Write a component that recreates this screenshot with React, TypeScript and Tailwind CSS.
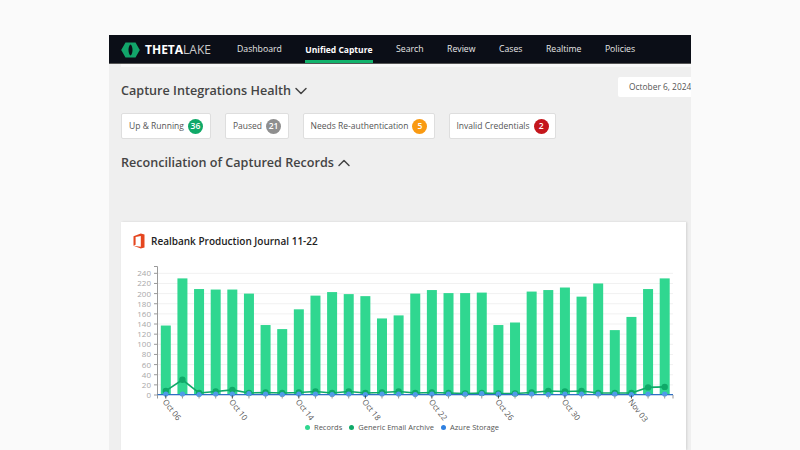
import { ChevronDown, ChevronUp } from "lucide-react";

const navItems = ["Dashboard", "Unified Capture", "Search", "Review", "Cases", "Realtime", "Policies"];

const pills = [
  { label: "Up & Running", count: "36", color: "bg-[#0fa968]", width: "w-[90px]" },
  { label: "Paused", count: "21", color: "bg-[#8f8f8f]", width: "w-[64px]" },
  { label: "Needs Re-authentication", count: "5", color: "bg-[#f99a12]", width: "w-[132px]" },
  { label: "Invalid Credentials", count: "2", color: "bg-[#c4161c]", width: "w-[107px]" },
];

const records = [
  137, 230, 209, 208, 208, 200, 138, 130, 169, 196, 203, 199, 195, 151, 157, 200, 207, 201, 201,
  202, 138, 143, 204, 207, 212, 194, 220, 128, 154, 209, 230,
];
const email = [
  8, 30, 4, 7, 10, 4, 5, 4, 5, 7, 4, 7, 4, 5, 7, 4, 5, 4, 3, 4, 3, 3, 5, 8, 7, 8, 4, 4, 4, 15, 16,
];
const azure = [
  2, 2, 1, 2, 2, 3, 2, 1, 2, 2, 1, 2, 1, 2, 2, 1, 2, 2, 2, 3, 2, 2, 2, 1, 2, 2, 2, 2, 1, 2, 2,
];
const yTicks = [0, 20, 40, 60, 80, 100, 120, 140, 160, 180, 200, 220, 240];
const xLabels = ["Oct 06", "Oct 10", "Oct 14", "Oct 18", "Oct 22", "Oct 26", "Oct 30", "Nov 03"];

const barX = (i: number) => 165.8 + i * 16.63;
const valY = (v: number) => 395 - v * 0.507;

function Logo() {
  return (
    <svg width="19" height="16" viewBox="0 0 19 16">
      <path d="M4.5 0.5H14.5L18.8 8L14.5 15.5H4.5L0.2 8Z" fill="#12a46a" />
      <path d="M9.5 2.5C6.8 4 6.8 12 9.5 13.5C12.2 12 12.2 4 9.5 2.5Z" fill="#0b0e17" />
    </svg>
  );
}

function OfficeIcon() {
  return (
    <svg width="12" height="16" viewBox="0 0 12 16">
      <path d="M0.5 3.2L7.8 0.4L11.5 1.5V14.4L7.8 15.6L0.5 12.8L7.8 13.8V2.9L2.6 4V11.7L0.5 12.8Z" fill="#e5461f" />
    </svg>
  );
}

function Chart() {
  return (
    <svg width="565" height="161" viewBox="121 262 565 161" className="block">
      {yTicks.map((t) => (
        <g key={t}>
          <line x1="157" x2="673" y1={valY(t)} y2={valY(t)} stroke="#f1f1f1" />
          <line x1="154" x2="157.5" y1={valY(t)} y2={valY(t)} stroke="#9a9a9a" />
          <text x="151" y={valY(t) + 3} textAnchor="end" fontSize="8" fill="#a8a8a8">
            {t}
          </text>
        </g>
      ))}
      <line x1="154" x2="157.5" y1="266.5" y2="266.5" stroke="#9a9a9a" />
      <line x1="157.5" x2="157.5" y1="266.5" y2="395" stroke="#9a9a9a" />
      {records.map((v, i) => (
        <rect key={i} x={barX(i) - 5} y={valY(v)} width="10" height={v * 0.507} fill="#30d790" />
      ))}
      <polyline
        points={email.map((v, i) => `${barX(i)},${valY(v)}`).join(" ")}
        fill="none"
        stroke="#0fa968"
        strokeWidth="1.6"
      />
      {email.map((v, i) => (
        <circle key={i} cx={barX(i)} cy={valY(v)} r="3.2" fill="#0fa968" />
      ))}
      <line x1="157.5" x2="673" y1="394.7" y2="394.7" stroke="#2f6fc4" strokeWidth="1.2" />
      {azure.map((v, i) => (
        <circle key={i} cx={barX(i)} cy={valY(v)} r="2.6" fill="#4f9be8" />
      ))}
      {records.map((_, i) => (
        <line key={i} x1={barX(i)} x2={barX(i)} y1="395.5" y2="398.5" stroke={i % 4 === 0 ? "#444" : "#999"} />
      ))}
      <line x1="157.5" x2="157.5" y1="395" y2="398.5" stroke="#999" />
      <line x1="673" x2="673" y1="395" y2="398.5" stroke="#999" />
      {xLabels.map((label, i) => (
        <text
          key={label}
          x={barX(i * 4) - 3.5}
          y="402"
          fontSize="8"
          fill="#555"
          transform={`rotate(52 ${barX(i * 4) - 3.5} 402)`}
        >
          {label}
        </text>
      ))}
    </svg>
  );
}

export default function App() {
  return (
    <div className="h-[450px] w-[800px] overflow-hidden bg-[#fafafa] pt-[35px] pl-[109px] font-['Open_Sans',sans-serif]">
      <div className="h-[415px] w-[582px] overflow-hidden bg-[#efefef]">
        <div className="flex h-[29px] items-center border-b border-[#555] bg-[#0b0e17]">
          <div className="ml-[12px] flex w-[116px] items-center gap-[5px] pt-[2px]">
            <Logo />
            <span className="text-[12px] leading-none font-bold text-white">
              THETA<span className="font-normal text-[#c9c9c9]">LAKE</span>
            </span>
          </div>
          <div className="flex h-full gap-[23.5px]">
            {navItems.map((item) => (
              <div
                key={item}
                className={
                  item === "Unified Capture"
                    ? "flex h-full items-center border-b-[3px] border-[#12b36d] pt-[5px] text-[8.5px] font-bold text-white"
                    : "flex h-full items-center pt-[2px] text-[8.7px] text-[#e8e8e8]"
                }
              >
                {item}
              </div>
            ))}
          </div>
        </div>
        <div className="ml-[12px] h-[3px] bg-[#f8f8f8]" />

        <div className="relative px-[12px]">
          <div className="absolute top-[10px] left-[509px] flex h-[20px] w-[90px] items-center rounded-[2px] bg-white pl-[11px] text-[8.4px] whitespace-nowrap text-[#555]">
            October 6, 2024
          </div>
          <div className="flex h-[46px] items-center pt-[2px] text-[12.6px] font-semibold text-[#444]">
            Capture Integrations Health
            <ChevronDown size={20} strokeWidth={1.8} />
          </div>
          <div className="flex gap-[14px]">
            {pills.map((pill) => (
              <div
                key={pill.label}
                className={`flex h-[26px] items-center justify-center gap-[4px] rounded-[2px] border border-[#dedede] bg-white text-[8.5px] whitespace-nowrap text-[#555] ${pill.width}`}
              >
                {pill.label}
                <span
                  className={`flex h-[15px] min-w-[15px] items-center justify-center rounded-full px-[1px] text-[8.5px] font-semibold text-white ${pill.color}`}
                >
                  {pill.count}
                </span>
              </div>
            ))}
          </div>
          <div className="mt-[10px] flex h-[28px] items-center text-[12.6px] font-semibold text-[#444]">
            Reconciliation of Captured Records
            <ChevronUp size={20} strokeWidth={1.8} />
          </div>

          <div className="mt-[45px] w-[565px] bg-white shadow-[1px_0_2px_rgba(0,0,0,0.12)]">
            <div className="mb-[2px] flex h-[38px] items-center gap-[6px] pl-[12px] text-[10px] font-semibold text-[#222]">
              <OfficeIcon />
              Realbank Production Journal 11-22
            </div>
            <Chart />
            <div className="flex h-[27px] items-start justify-center gap-[7px] pr-[3px] text-[7.5px] leading-[9px] text-[#555]">
              <span className="flex items-center gap-[4px]">
                <span className="h-[5px] w-[5px] rounded-full bg-[#30d790]" />
                Records
              </span>
              <span className="flex items-center gap-[4px]">
                <span className="h-[5px] w-[5px] rounded-full bg-[#0fa968]" />
                Generic Email Archive
              </span>
              <span className="flex items-center gap-[4px]">
                <span className="h-[5px] w-[5px] rounded-full bg-[#2f80e0]" />
                Azure Storage
              </span>
            </div>
          </div>
        </div>
      </div>
    </div>
  );
}
